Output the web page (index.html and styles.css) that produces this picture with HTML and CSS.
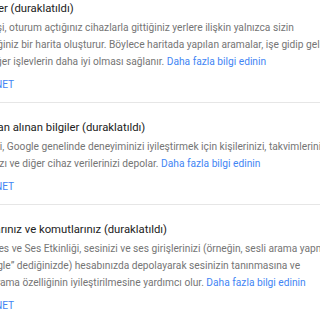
FILE: index.html
```html
<!DOCTYPE html>
<html lang="tr">
<head>
<meta charset="utf-8">
<link rel="stylesheet" href="styles.css">
</head>
<body>
<div class="page">
  <section class="control">
    <div class="title">Gittiğiniz yerler (duraklatıldı)</div>
    <div class="desc">
      <div class="line">Konum Geçmişi, oturum açtığınız cihazlarla gittiğiniz yerlere ilişkin yalnızca sizin</div>
      <div class="line">ayarlayabileceğiniz bir harita oluşturur. Böylece haritada yapılan aramalar, işe gidip gelme</div>
      <div class="line">süreleri gibi diğer işlevlerin daha iyi olması sağlanır. <a class="more">Daha fazla bilgi edinin</a></div>
    </div>
    <div class="manage">ETKİNLİĞİ YÖNET</div>
  </section>
  <section class="control">
    <div class="title">Cihazlarınızdan alınan bilgiler (duraklatıldı)</div>
    <div class="desc">
      <div class="line">Cihazın Bilgileri, Google genelinde deneyiminizi iyileştirmek için kişilerinizi, takvimlerinizi,</div>
      <div class="line">uygulamalarınızı ve diğer cihaz verilerinizi depolar. <a class="more">Daha fazla bilgi edinin</a></div>
    </div>
    <div class="manage">ETKİNLİĞİ YÖNET</div>
  </section>
  <section class="control">
    <div class="title">Sesli aramalarınız ve komutlarınız (duraklatıldı)</div>
    <div class="desc">
      <div class="line">Ayar açık ise Ses ve Ses Etkinliği, sesinizi ve ses girişlerinizi (örneğin, sesli arama yapmak</div>
      <div class="line">üzere “Ok Google” dediğinizde) hesabınızda depolayarak sesinizin tanınmasına ve</div>
      <div class="line">Google sesli arama özelliğinin iyileştirilmesine yardımcı olur. <a class="more">Daha fazla bilgi edinin</a></div>
    </div>
    <div class="manage">ETKİNLİĞİ YÖNET</div>
  </section>
</div>
</body>
</html>
```

FILE: styles.css
```css
html, body {
  margin: 0;
  padding: 0;
  background: #ffffff;
  overflow: hidden;
  width: 320px;
  height: 320px;
}

.page {
  margin-top: -16px;
  margin-left: -67px;
  width: 700px;
  font-family: Roboto, "Noto Sans", sans-serif;
}

.control {
  padding: 16px 0 9px 0;
  border-bottom: 1px solid #e6e6e6;
}

.title {
  font-size: 11.3px;
  line-height: 17px;
  color: #212121;
  white-space: nowrap;
}

.desc {
  margin-top: 2px;
  font-size: 10.2px;
  line-height: 17px;
  color: #757575;
}

.line {
  white-space: nowrap;
}

.more {
  color: #4285f4;
  text-decoration: none;
}

.manage {
  margin-top: 6px;
  font-size: 10.2px;
  line-height: 17px;
  color: #4285f4;
  white-space: nowrap;
}
```
